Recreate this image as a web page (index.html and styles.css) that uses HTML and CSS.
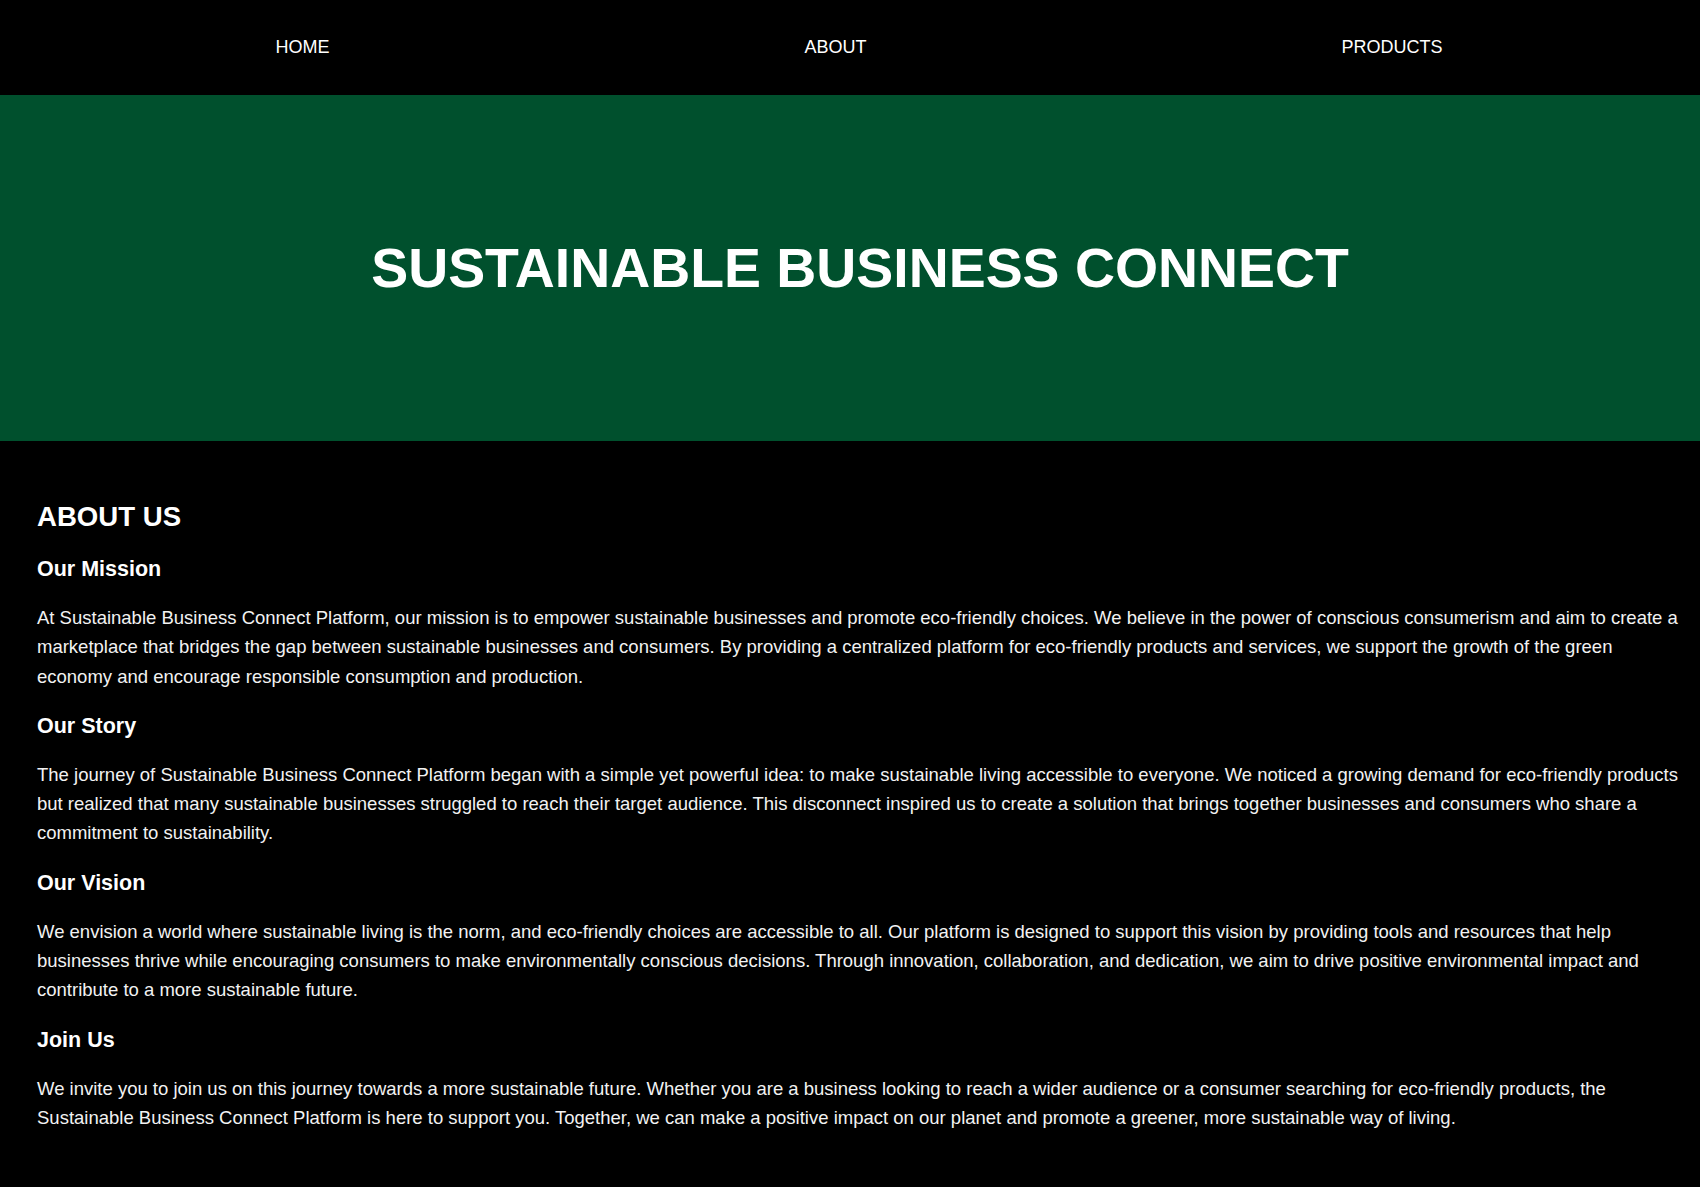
FILE: index.html
```html
<!DOCTYPE html>
<html lang="en">
<head>
<meta charset="utf-8">
<title>Sustainable Business Connect</title>
<link rel="stylesheet" href="styles.css">
</head>
<body>
<nav class="topnav">
  <ul class="nav-list">
    <li><a href="#" class="nav-link">HOME</a></li>
    <li><a href="#" class="nav-link">ABOUT</a></li>
    <li><a href="#" class="nav-link">PRODUCTS</a></li>
  </ul>
</nav>
<header class="hero">
  <h1 class="hero-title">SUSTAINABLE BUSINESS CONNECT</h1>
</header>
<main class="about">
  <h2 class="about-title">ABOUT US</h2>
  <h3 class="sub-title">Our Mission</h3>
  <p class="text">At Sustainable Business Connect Platform, our mission is to empower sustainable businesses and promote eco-friendly choices. We believe in the power of conscious consumerism and aim to create a marketplace that bridges the gap between sustainable businesses and consumers. By providing a centralized platform for eco-friendly products and services, we support the growth of the green economy and encourage responsible consumption and production.</p>
  <h3 class="sub-title">Our Story</h3>
  <p class="text">The journey of Sustainable Business Connect Platform began with a simple yet powerful idea: to make sustainable living accessible to everyone. We noticed a growing demand for eco-friendly products but realized that many sustainable businesses struggled to reach their target audience. This disconnect inspired us to create a solution that brings together businesses and consumers who share a commitment to sustainability.</p>
  <h3 class="sub-title">Our Vision</h3>
  <p class="text">We envision a world where sustainable living is the norm, and eco-friendly choices are accessible to all. Our platform is designed to support this vision by providing tools and resources that help businesses thrive while encouraging consumers to make environmentally conscious decisions. Through innovation, collaboration, and dedication, we aim to drive positive environmental impact and contribute to a more sustainable future.</p>
  <h3 class="sub-title">Join Us</h3>
  <p class="text">We invite you to join us on this journey towards a more sustainable future. Whether you are a business looking to reach a wider audience or a consumer searching for eco-friendly products, the Sustainable Business Connect Platform is here to support you. Together, we can make a positive impact on our planet and promote a greener, more sustainable way of living.</p>
</main>
</body>
</html>
```

FILE: styles.css
```css
html, body {
  margin: 0;
  padding: 0;
  background: #000;
  color: #fff;
  font-family: "Liberation Sans", Arial, sans-serif;
}

.topnav {
  height: 95px;
  background: #000;
  display: flex;
  align-items: center;
}

.nav-list {
  list-style: none;
  margin: 0;
  padding: 0 20px 0 38px;
  width: 100%;
  display: flex;
  justify-content: space-around;
}

.nav-link {
  color: #fff;
  text-decoration: none;
  font-size: 18px;
}

.hero {
  height: 346px;
  background: #00502d;
  display: flex;
  align-items: center;
  justify-content: center;
  padding-left: 20px;
}

.hero-title {
  margin: 0;
  font-size: 55.4px;
  font-weight: bold;
  color: #fff;
}

.about {
  padding: 37px 20px 40px 37px;
}

.about-title {
  margin: 23px 0 24px;
  font-size: 27.6px;
  font-weight: bold;
}

.sub-title {
  margin: 23px 0 21px;
  font-size: 21.5px;
  font-weight: bold;
}

.text {
  margin: 21px 0 23px;
  font-size: 18.5px;
  line-height: 29.3px;
  color: #f2f2f2;
}
```
